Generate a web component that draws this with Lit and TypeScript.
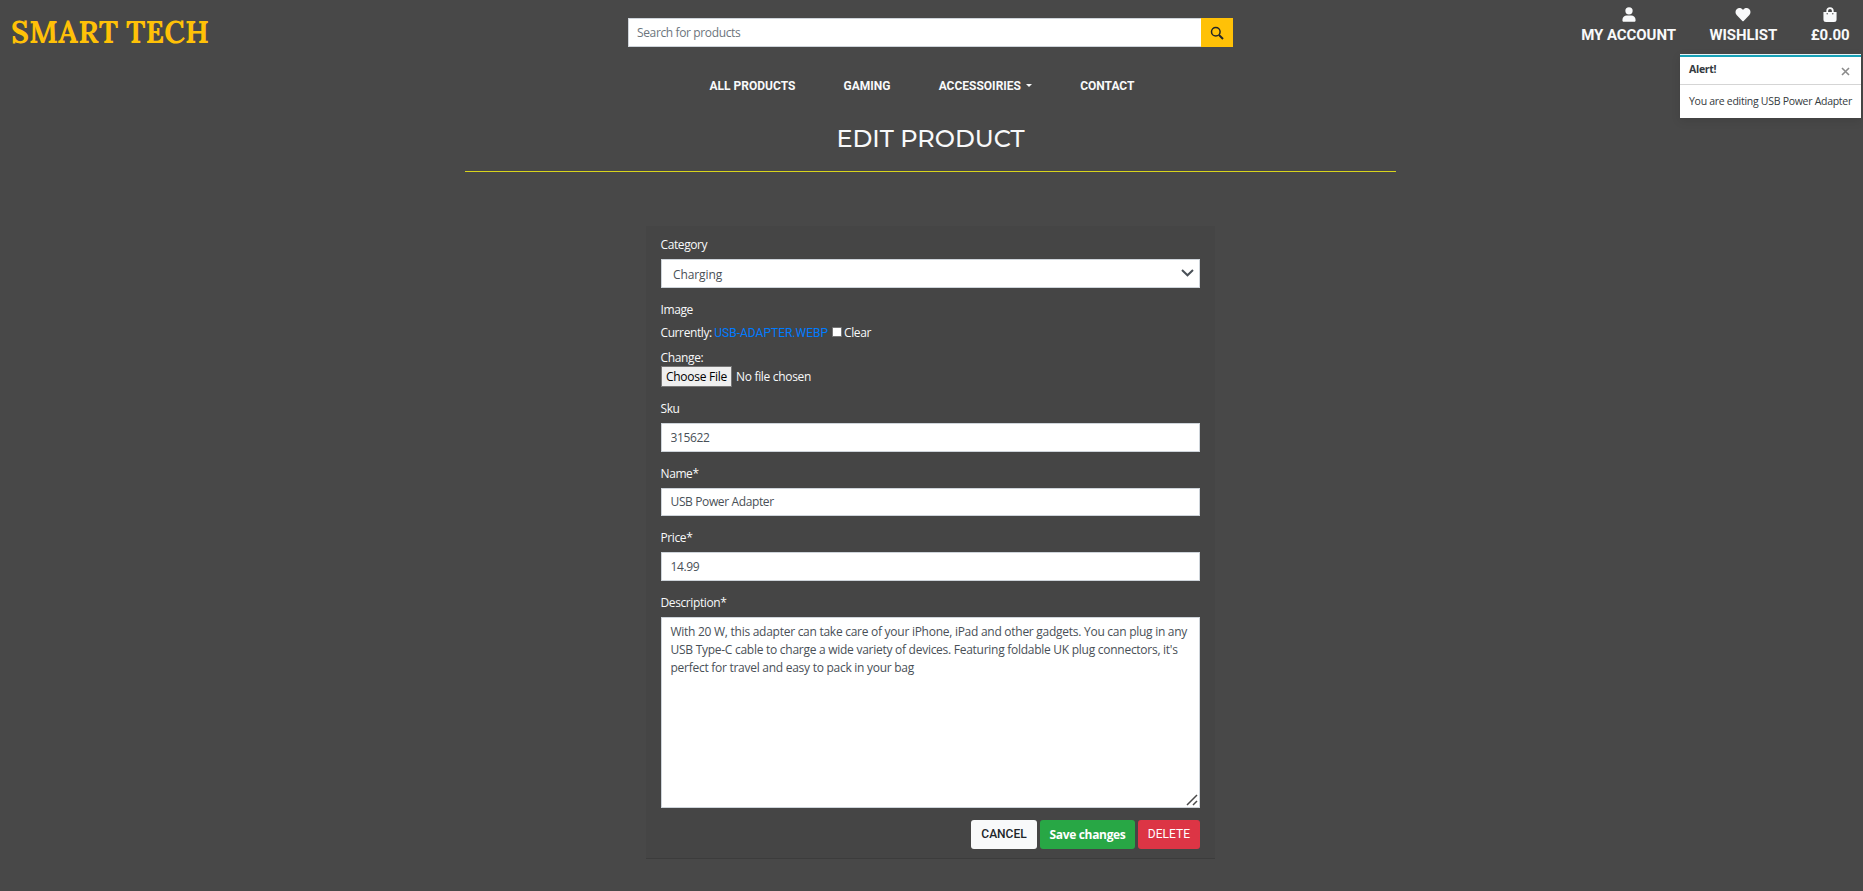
import { LitElement, html, css, svg } from "lit";
import { customElement } from "lit/decorators.js";

const userIcon = svg`<path d="M8 8a3.9 3.9 0 1 0 0-7.8A3.9 3.9 0 0 0 8 8ZM5.6 9h4.800c2.600 0 4.600 2 4.600 4.500v.8c0 .8-.6 1.400-1.400 1.400H2.400c-.8 0-1.400-.6-1.400-1.400v-.8C1 11 3 9 5.600 9Z"/>`;
const heartIcon = svg`<path d="M14.500 2.100C12.800.6 10.200.9 8.600 2.500L8 3.200l-.6-.7C5.800.9 3.200.6 1.500 2.100c-1.900 1.700-2 4.600-.3 6.400l6.100 6.300c.4.4 1 .4 1.400 0l6.100-6.300c1.700-1.800 1.600-4.700-.3-6.400Z"/>`;
const bagIcon = svg`<path fill-rule="evenodd" d="M11.900 5.200V4.100a3.900 3.900 0 0 0-7.800 0v1.100H1v8a2.700 2.700 0 0 0 2.700 2.700h8.600a2.700 2.700 0 0 0 2.700-2.700v-8h-3.100ZM6 4.100a2 2 0 0 1 4 0v1.100H6V4.100Zm5 3.900a.75.75 0 1 1 0-1.500.75.75 0 0 1 0 1.500ZM5 8a.75.75 0 1 1 0-1.500A.75.75 0 0 1 5 8Z"/>`;

@customElement("app-root")
export class AppRoot extends LitElement {
  static styles = css`
    :host {
      display: block;
      height: 891px;
      overflow: hidden;
      background: #484848;
      color: #f8f9fa;
      font: 12px/18px "Open Sans", "Noto Sans", sans-serif;
      position: relative;
      box-sizing: border-box;
      padding-right: 2px;
    }
    * { box-sizing: border-box; }
    .top { display: grid; grid-template-columns: 1fr 605px 1fr; height: 65px; }
    .logo {
      padding: 14px 0 0 11px;
      font: 700 30px/36px Lora, "Liberation Serif", serif;
      letter-spacing: 0;
      color: #ffc107;
      white-space: nowrap;
    }
    .search { display: flex; height: 29px; margin-top: 18px; }
    .search input { flex: 1; width: 0; border-right: 0; height: 29px; padding-left: 8px; }
    .search button {
      width: 32px; border: 0; padding: 0; background: #ffc107; color: #212529;
      display: flex; align-items: center; justify-content: center;
    }
    .account {
      display: flex; justify-content: flex-end; gap: 33.500px; padding: 7px 11.500px 0 0;
      font: 700 15px/18px Roboto, sans-serif;
      letter-spacing: -0.07px;
    }
    .account a { display: flex; flex-direction: column; align-items: center; white-space: nowrap; }
    .account svg { display: block; height: 15px; margin-bottom: 4px; }
    svg { fill: currentColor; }
    nav {
      display: flex; justify-content: center; gap: 48.200px; height: 42px; padding: 0 8px 0 0;
      margin-left: -9px;
      font: 700 12px/18px Roboto, sans-serif;
    }
    nav span { display: flex; align-items: center; }
    .caret { border: 3.500px solid transparent; border-top-color: currentColor; border-bottom: 0; margin: 0 0 1px 5px; }
    .heading {
      width: 931px; height: 65px; margin: 0 auto; padding-top: 17px; text-align: center;
      font: 500 24px/29px Montserrat, Inter, sans-serif;
      border-bottom: 1px solid #d8d41c;
    }
    .heading h1 { font: inherit; margin: 0; }
    .card {
      width: 569px; height: 633px; margin: 54px auto 0; padding: 9px 15px 0;
      background: #454545; border-bottom: 1px solid #3c3c3c;
    }
    .label { display: block; height: 18px; padding-top: 1px; margin: 0 0 6px -0.500px; font-weight: 500; letter-spacing: -0.4px; }
    .control {
      display: block; width: 100%; height: 28.500px; margin: 0 0 12px; padding: 5px 9px 5px 8.500px;
      border: 1px solid #ced4da; border-radius: 0; background: #fff; color: #495057;
      font: 400 12px/18px "Open Sans", "Noto Sans", sans-serif; letter-spacing: -0.37px; outline: 0;
    }
    .control::placeholder { color: #6c757d; opacity: 1; }
    .select { display: flex; justify-content: space-between; padding: 6px 5px 0 11px; letter-spacing: -0.1px; height: 29px; margin: 0 0 11.500px; }
    .select svg { margin-top: 2px; fill: none; stroke: #495057; stroke-width: 2; }
    .area { display: grid; justify-items: end; align-items: end; height: 191px; margin-bottom: 12px; }
    .area > * { grid-area: 1 / 1; }
    .area textarea { height: 191px; margin: 0; padding: 5px 9px 5px 8.500px; resize: none; letter-spacing: -0.268px; white-space: pre; overflow: hidden; }
    .area svg { z-index: 1; margin: 0 2px 2px 0; stroke: #4a4a4a; stroke-width: 1.500; }
    .current { display: flex; align-items: center; margin: 0 0 6px -0.500px; padding-top: 1px; height: 18px; font-weight: 500; letter-spacing: -0.4px; white-space: pre; }
    .current a { color: #007bff; font: 400 12px/18px Roboto, sans-serif; letter-spacing: 0; margin: 0 3.500px 0 2.500px; }
    .box { width: 10px; height: 10px; background: #fff; border: 1px solid #767676; border-radius: 1px; margin: 0 2.500px 2px 0; }
    .change { height: 18px; padding-top: 1px; margin-left: -0.500px; font-weight: 500; letter-spacing: -0.35px; }
    .file { display: flex; align-items: center; height: 21px; margin: 0.500px 0 12px; font-weight: 500; letter-spacing: -0.32px; }
    .file button {
      width: 71px; height: 21px; padding: 1px 0 0; margin-right: 4px; color: #000; background: #efefef;
      border: 1px solid #767676; font: 400 12px/18px "Open Sans", sans-serif; letter-spacing: -0.25px; white-space: nowrap;
    }
    .file span { padding-top: 1px; }
    .actions { display: flex; justify-content: flex-end; gap: 3px; }
    .btn {
      height: 29px; border: 0; border-radius: 3px; padding: 0 0 1px; text-align: center;
      font: 500 12px/28px Roboto, sans-serif; white-space: nowrap;
    }
    .cancel { width: 66px; background: #f8f9fa; color: #212529; }
    .save { width: 95px; padding: 1px 0 0; background: #28a745; color: #fff; font: 700 12px/28px "Open Sans", sans-serif; letter-spacing: -0.33px; }
    .delete { width: 62px; background: #dc3545; color: #fff; font-weight: 400; letter-spacing: 0.05px; }
    .toast {
      position: absolute; top: 54px; right: 2px; width: 181px; height: 64px; background: #fff; color: #343a40;
      border-top: 1px solid #e8f4f6; font-size: 10.500px; letter-spacing: -0.28px; white-space: nowrap;
      box-shadow: 0 3px 9px rgba(0, 0, 0, 0.1);
    }
    .toast header {
      border-top: 2px solid #17a2b8; border-bottom: 1px solid #d5d5d5; height: 30px; padding: 3px 11px 0 9px;
      display: flex; justify-content: space-between; font-weight: 700; line-height: 18px;
    }
    .toast header svg { margin-top: 7px; stroke: #8b8b8b; stroke-width: 1.600; }
    .toast p { margin: 0; padding: 7px 9px; }
  `;

  field(label: string, value: string) {
    return html`<label class="label">${label}</label><input class="control" .value=${value} />`;
  }

  render() {
    const entries: [unknown, string][] = [[userIcon, "MY ACCOUNT"], [heartIcon, "WISHLIST"], [bagIcon, "£0.00"]];
    return html`
      <div class="top">
        <div class="logo">SMART TECH</div>
        <div class="search">
          <input class="control" placeholder="Search for products" />
          <button aria-label="Search">
            <svg width="14" height="14" viewBox="0 0 14 14"><g fill="none" stroke="currentColor"><circle cx="5.800" cy="5.800" r="4.300" stroke-width="1.500"/><path d="m9 9 4 4" stroke-width="1.900"/></g></svg>
          </button>
        </div>
        <div class="account">
          ${entries.map(([icon, text]) => html`<a><svg width="16" height="15" viewBox="0 0 16 16">${icon}</svg>${text}</a>`)}
        </div>
      </div>
      <nav><span>ALL PRODUCTS</span><span>GAMING</span><span>ACCESSOIRIES<i class="caret"></i></span><span>CONTACT</span></nav>
      <div class="heading"><h1>EDIT PRODUCT</h1></div>
      <div class="card">
        <label class="label">Category</label>
        <div class="control select">Charging<svg width="13" height="10" viewBox="0 0 13 10"><path d="m1 2 5.500 5.300L12 2"/></svg></div>
        <label class="label">Image</label>
        <div class="current">Currently:<a>USB-ADAPTER.WEBP</a><i class="box"></i>Clear</div>
        <div class="change">Change:</div>
        <div class="file"><button>Choose File</button><span>No file chosen</span></div>
        ${this.field("Sku", "315622")}
        ${this.field("Name*", "USB Power Adapter")}
        ${this.field("Price*", "14.99")}
        <label class="label">Description*</label>
        <div class="area">
          <textarea class="control" .value=${"With 20 W, this adapter can take care of your iPhone, iPad and other gadgets. You can plug in any\nUSB Type-C cable to charge a wide variety of devices. Featuring foldable UK plug connectors, it's\nperfect for travel and easy to pack in your bag"}></textarea>
          <svg width="12" height="12" viewBox="0 0 12 12"><path d="M1 11 11 1M7 11l4-4"/></svg>
        </div>
        <div class="actions">
          <button class="btn cancel">CANCEL</button><button class="btn save">Save changes</button><button class="btn delete">DELETE</button>
        </div>
      </div>
      <div class="toast">
        <header>Alert!<svg width="9" height="9" viewBox="0 0 9 9"><path d="m1 1 7 7M8 1 1 8"/></svg></header>
        <p>You are editing USB Power Adapter</p>
      </div>
    `;
  }
}
